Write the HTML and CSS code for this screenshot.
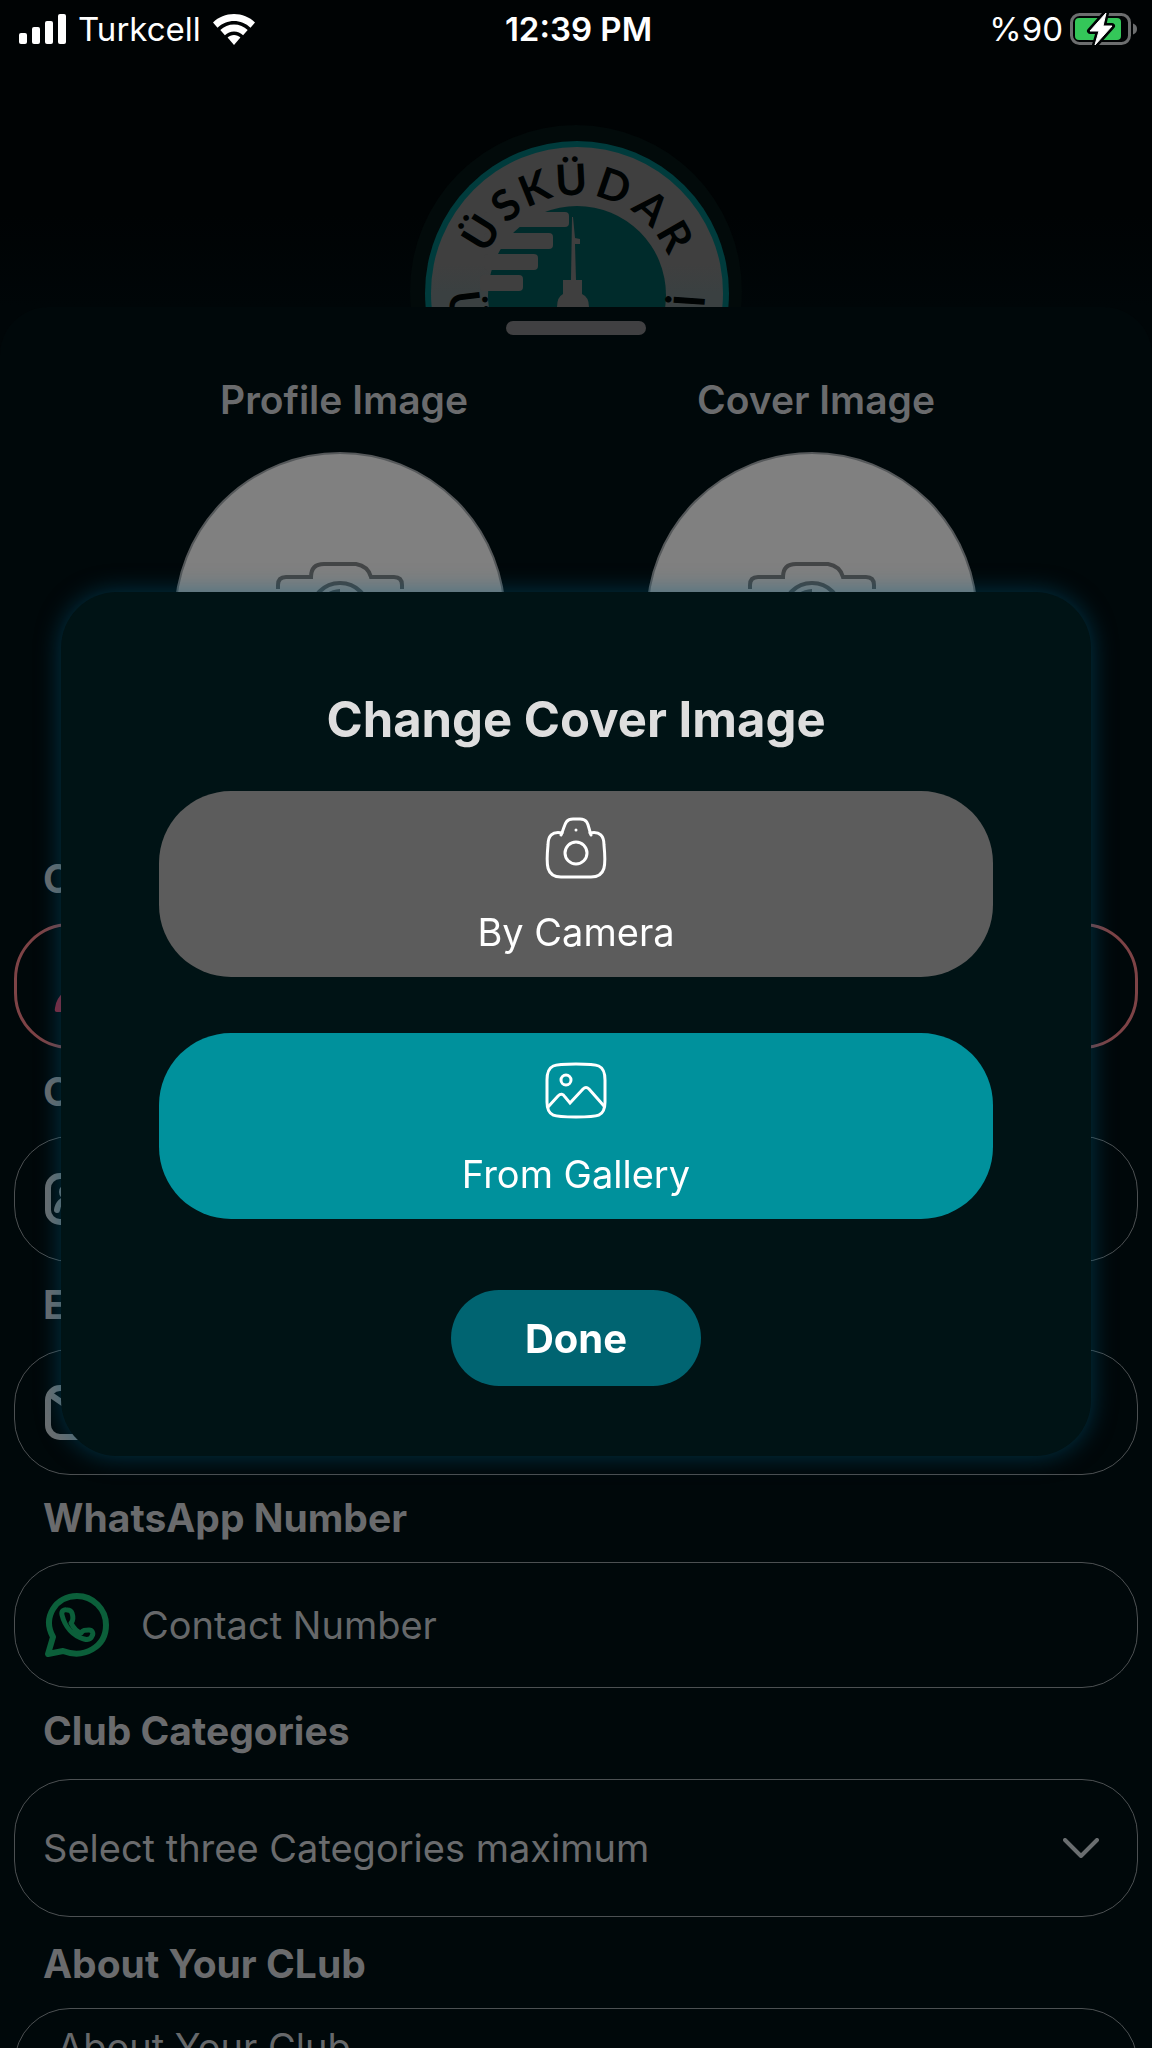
FILE: index.html
```html
<!DOCTYPE html>
<html lang="en">
<head>
<meta charset="utf-8">
<meta name="viewport" content="width=device-width, initial-scale=1">
<title>Club Profile</title>
<link rel="stylesheet" href="styles.css">
</head>
<body>
<div class="app">
  <header class="top">
    <div class="status">
      <div class="status-side">
        <svg class="signal" viewBox="0 0 47 30" width="47" height="30" aria-hidden="true"><rect x="0" y="19" width="8" height="11" rx="2"/><rect x="13" y="13" width="8" height="17" rx="2"/><rect x="26" y="7" width="8" height="23" rx="2"/><rect x="39" y="0" width="8" height="30" rx="2"/></svg>
        <span>Turkcell</span>
        <svg class="wifi" viewBox="0 0 42 31" width="42" height="31" aria-hidden="true"><path d="M21 0C13 0 5.500 3 0 8.500l4.500 5.200C9 9.300 15 7 21 7s12 2.300 16.500 6.700L42 8.500C36.500 3 29 0 21 0z"/><path d="M21 10.500c-5.300 0-10 2-13.700 5.600l4.600 5.200c2.400-2.300 5.600-3.800 9.100-3.800s6.700 1.500 9.100 3.800l4.600-5.200C31 12.500 26.300 10.500 21 10.500z"/><path d="M21 21c-2.500 0-4.700 1-6.400 2.500L21 31l6.400-7.500C25.700 22 23.500 21 21 21z"/></svg>
      </div>
      <span class="clock">12:39 PM</span>
      <div class="status-side status-end">
        <span>%90</span>
        <svg viewBox="0 0 68 34" width="68" height="34" aria-hidden="true"><rect x="1.500" y="2.500" width="58" height="29" rx="8" fill="none" stroke="#6c6e6f" stroke-width="3"/><path d="M63 11.500c3 1 4 3 4 5.500s-1 4.500-4 5.500z" fill="#6c6e6f"/><rect x="5" y="6" width="46" height="22" rx="4" fill="#34c759"/><path d="M36 1 20 19h9l-4 14 17-19h-9z" fill="#fff" stroke="#000304" stroke-width="6" stroke-linejoin="round"/><path d="M36 1 20 19h9l-4 14 17-19h-9z" fill="#fff" stroke="#fff" stroke-linejoin="round"/></svg>
      </div>
    </div>
    <svg class="crest" viewBox="408 121 336 186" width="336" height="186" role="img" aria-label="Üsküdar">
      <defs><linearGradient id="ring" x1="0" y1="0" x2="0" y2="1"><stop offset="0.400" stop-color="#3f3f3f"/><stop offset="0.500" stop-color="#3a4041"/></linearGradient></defs>
      <circle cx="576" cy="291" r="166" fill="#020a0a"/>
      <circle cx="577" cy="293" r="152" fill="#003b3c"/>
      <circle cx="577" cy="293" r="146" fill="url(#ring)"/>
      <circle cx="577" cy="295" r="89" fill="#002b2b"/>
      <g fill="#3f3f3f">
        <rect x="484" y="212" width="85" height="15" rx="4"/><rect x="484" y="233" width="69" height="16" rx="4"/><rect x="484" y="254" width="54" height="16" rx="4"/><rect x="480" y="275" width="43" height="16" rx="4"/>
        <path d="M572 217h1l2 21 5 1v5h-5l1 36h6v14q7 3 7 13h-32q0-10 6-13v-14h8z"/>
      </g>
      <g class="crest-text" text-anchor="middle">
        <text x="577" y="195" transform="rotate(-58 577 293)">Ü</text>
        <text x="577" y="195" transform="rotate(-39 577 293)">S</text>
        <text x="577" y="195" transform="rotate(-22 577 293)">K</text>
        <text x="577" y="195" transform="rotate(-3 577 293)">Ü</text>
        <text x="577" y="195" transform="rotate(19 577 293)">D</text>
        <text x="577" y="195" transform="rotate(41 577 293)">A</text>
        <text x="577" y="195" transform="rotate(60 577 293)">R</text>
        <text x="577" y="421" transform="rotate(83 577 293)">Ü</text>
        <text x="577" y="421" transform="rotate(-86 577 293)">İ</text>
      </g>
    </svg>
  </header>

  <main class="sheet">
    <div class="handle"></div>
    <div class="images">
      <div class="image-slot">
        <h2>Profile Image</h2>
        <button class="image-circle" type="button" aria-label="Change profile image">
          <svg viewBox="0 0 128 112" width="128" height="112" aria-hidden="true"><path d="M2 27v-4q0-8 8-8h25q0-13 13-13h32q12 2 15 13h23q8 0 8 8v4M2 50v42q0 8 8 8h106q8 0 8-8V50"/><circle cx="64" cy="50" r="29"/><path class="solid" d="M64 27v8q-9 1-14 7h-9q8-14 23-15z"/></svg>
        </button>
      </div>
      <div class="image-slot">
        <h2>Cover Image</h2>
        <button class="image-circle" type="button" aria-label="Change cover image">
          <svg viewBox="0 0 128 112" width="128" height="112" aria-hidden="true"><path d="M2 27v-4q0-8 8-8h25q0-13 13-13h32q12 2 15 13h23q8 0 8 8v4M2 50v42q0 8 8 8h106q8 0 8-8V50"/><circle cx="64" cy="50" r="29"/><path class="solid" d="M64 27v8q-9 1-14 7h-9q8-14 23-15z"/></svg>
        </button>
      </div>
    </div>

    <form class="form">
      <div class="group">
        <label for="name">Club</label>
        <div class="field field-error">
          <svg class="person" viewBox="0 0 64 64" width="64" height="64" aria-hidden="true"><circle cx="32" cy="20" r="12"/><path d="M10 58q-3 0-2-4c4-28 44-28 48 0q1 4-2 4z"/></svg>
          <input id="name" type="text">
        </div>
      </div>
      <div class="group">
        <label for="owner">Club</label>
        <div class="field">
          <svg viewBox="0 0 64 64" width="64" height="64" aria-hidden="true"><rect x="3" y="9" width="58" height="46" rx="12"/><path d="M12 43c2-14 18-14 20 0"/><circle cx="22" cy="25" r="5"/><path d="M40 25h12M40 37h12"/></svg>
          <input id="owner" type="text">
        </div>
      </div>
      <div class="group">
        <label for="email">Email</label>
        <div class="field">
          <svg viewBox="0 0 64 64" width="64" height="64" aria-hidden="true"><rect x="3" y="8" width="58" height="49" rx="12"/><path d="m6 15 26 18 26-18"/></svg>
          <input id="email" type="email">
        </div>
      </div>
      <div class="group">
        <label for="whatsapp">WhatsApp Number</label>
        <div class="field">
          <svg class="whatsapp" viewBox="0 0 64 64" width="64" height="64" aria-hidden="true"><path d="M3 61l5-17C-3 24 11 3 32 3c16 0 29 13 29 29 0 22-22 34-43 26z"/><path d="M22 17c-3-1-6 1-5 5 3 12 11 21 22 24 4 1 7 0 8-3 2-3 0-6-3-6-4 0-6 0-8 3-5-2-8-6-10-10 3-3 2-7 1-10q-1-3-5-3z" stroke-width="5"/></svg>
          <input id="whatsapp" type="tel" placeholder="Contact Number">
        </div>
      </div>
      <div class="group group-tall">
        <label for="categories">Club Categories</label>
        <div class="field field-select">
          <select id="categories"><option>Select three Categories maximum</option></select>
          <svg class="chevron" viewBox="0 0 36 20" width="36" height="20" aria-hidden="true"><path d="m2 2 16 16L34 2"/></svg>
        </div>
      </div>
      <div class="group">
        <label for="about">About Your CLub</label>
        <textarea id="about" placeholder="About Your Club"></textarea>
      </div>
    </form>
  </main>
</div>

<div class="backdrop">
  <section class="dialog" role="dialog" aria-modal="true" aria-labelledby="dialog-title">
    <h1 id="dialog-title">Change Cover Image</h1>
    <div class="choices">
      <button class="choice choice-camera" type="button">
        <svg viewBox="0 0 62 62" width="62" height="62" aria-hidden="true"><path d="M17 16c-10-2-14 3-14 12-2 20-2 32 13 32h30c15 0 15-12 13-32 0-9-4-14-14-12"/><path d="M16 18c4-8 3-16 12-16h7c9 0 8 8 11 16"/><circle cx="31" cy="36" r="11"/><circle class="dot" cx="31" cy="13" r="1.500"/></svg>
        <span>By Camera</span>
      </button>
      <button class="choice choice-gallery" type="button">
        <svg viewBox="0 0 62 62" width="62" height="62" aria-hidden="true"><path d="M31 5c22 0 29 0 29 16v22c0 15-7 15-29 15S2 58 2 43V21C2 5 9 5 31 5z"/><circle cx="21" cy="21" r="5"/><path d="m3 48 10-11q4-4 7 1l5 6 13-14q3-3 6 0l15 17"/></svg>
        <span>From Gallery</span>
      </button>
    </div>
    <button class="done" type="button">Done</button>
  </section>
</div>
</body>
</html>
```
FILE: styles.css
```css
* {
  box-sizing: border-box;
}

body {
  margin: 0;
  background: #000304;
  font-family: Inter, "Liberation Sans", sans-serif;
}

button,
input,
select,
textarea {
  font: inherit;
  color: inherit;
  border: 0;
  padding: 0;
  background: none;
}

svg {
  flex: none;
  display: block;
}

h1,
h2 {
  margin: 0;
}

/* Screen behind the dialog, cut at the bottom of the window */
.app {
  height: 100vh;
  overflow: hidden;
  background: #000608;
  color: #6a6b6d;
}

.top {
  display: flex;
  flex-direction: column;
  gap: 61px;
  background: linear-gradient(#000304 70%, #000608);
}

.status {
  display: grid;
  grid-template-columns: 1fr auto 1fr;
  align-items: center;
  height: 60px;
  padding: 0 14px 2px 19px;
  color: #fff;
  font-size: 33px;
}

.status-side {
  display: flex;
  align-items: center;
  gap: 12px;
}

.status-end {
  justify-content: flex-end;
  gap: 7px;
}

.signal,
.wifi {
  fill: #fff;
}

.clock {
  font-weight: 600;
}

.crest {
  align-self: center;
}

.crest-text {
  fill: #000303;
  font-family: Lato, "Liberation Sans", sans-serif;
  font-size: 43px;
  font-weight: 700;
}

.sheet {
  display: flex;
  flex-direction: column;
  padding: 14px 14px 0;
  border-radius: 48px 48px 0 0;
  background: #00080a;
}

.handle {
  align-self: center;
  width: 140px;
  height: 14px;
  border-radius: 7px;
  background: #404042;
}

.images {
  display: grid;
  grid-template-columns: 1fr 1fr;
  margin: 41px 90px 71px;
}

.image-slot {
  display: flex;
  flex-direction: column;
  align-items: center;
  gap: 28px;
}

.image-slot h2 {
  padding-left: 8px;
  font-size: 39px;
  font-weight: 600;
  line-height: 48px;
}

.image-circle {
  display: grid;
  place-items: center;
  width: 332px;
  height: 332px;
  border: 2px solid #55585a;
  border-radius: 50%;
  background: #808080;
}

.image-circle svg {
  fill: none;
  stroke: #444647;
  stroke-width: 4;
}

.image-circle .solid {
  fill: #444647;
  stroke: none;
}

.form {
  display: flex;
  flex-direction: column;
  gap: 19px;
}

.group {
  display: flex;
  flex-direction: column;
  gap: 20px;
}

.group-tall {
  gap: 24px;
  padding-bottom: 4px;
}

.group label {
  padding-left: 29px;
  font-size: 39px;
  font-weight: 700;
  line-height: 48px;
}

.field {
  display: flex;
  align-items: center;
  gap: 32px;
  height: 126px;
  padding: 0 30px;
  border: 1px solid #4c5052;
  border-radius: 56px;
  font-size: 38px;
}

.field-error {
  border: 3px solid #7d4346;
}

.field svg {
  fill: none;
  stroke: #6a6e70;
  stroke-width: 6;
  stroke-linecap: round;
  stroke-linejoin: round;
}

.field .person {
  stroke: none;
  fill: #8c2438;
}

.field .whatsapp {
  stroke: #0b5f3a;
}

.field input,
.field select {
  flex: 1;
  min-width: 0;
  height: 64px;
}

.field select {
  appearance: none;
}

.field-select {
  height: 138px;
  padding: 0 38px 0 28px;
}

.field .chevron {
  stroke-width: 4;
}

textarea {
  height: 240px;
  padding: 14px 42px;
  border: 1px solid #4c5052;
  border-radius: 56px;
  resize: none;
}

.group textarea {
  font-size: 38px;
  line-height: 48px;
}

::placeholder {
  color: #66686a;
  opacity: 1;
}

.backdrop {
  position: fixed;
  inset: 0;
  display: flex;
  align-items: center;
  padding: 0 61px;
}

.dialog {
  display: flex;
  flex: 1;
  flex-direction: column;
  align-items: center;
  padding: 96px 98px 70px;
  border-radius: 56px;
  background: #001315;
  box-shadow: 0 0 24px rgba(0, 98, 135, 0.5);
}

.dialog h1 {
  color: #dedede;
  font-size: 49px;
  font-weight: 700;
  line-height: 64px;
}

.choices {
  display: flex;
  flex-direction: column;
  align-self: stretch;
  gap: 56px;
  margin: 39px 0 71px;
}

.choice {
  display: flex;
  flex-direction: column;
  align-items: center;
  gap: 29px;
  height: 186px;
  padding-top: 26px;
  border-radius: 72px;
  color: #fff;
  font-size: 38px;
  line-height: 48px;
}

.choice svg {
  fill: none;
  stroke: #fff;
  stroke-width: 3;
  stroke-linecap: round;
}

.choice .dot {
  fill: #fff;
  stroke: none;
}

.choice-camera {
  background: #5c5c5c;
}

.choice-gallery {
  background: #00919c;
}

.done {
  width: 250px;
  height: 96px;
  border-radius: 48px;
  background: #006471;
  color: #fff;
  font-size: 40px;
  font-weight: 700;
}
```
